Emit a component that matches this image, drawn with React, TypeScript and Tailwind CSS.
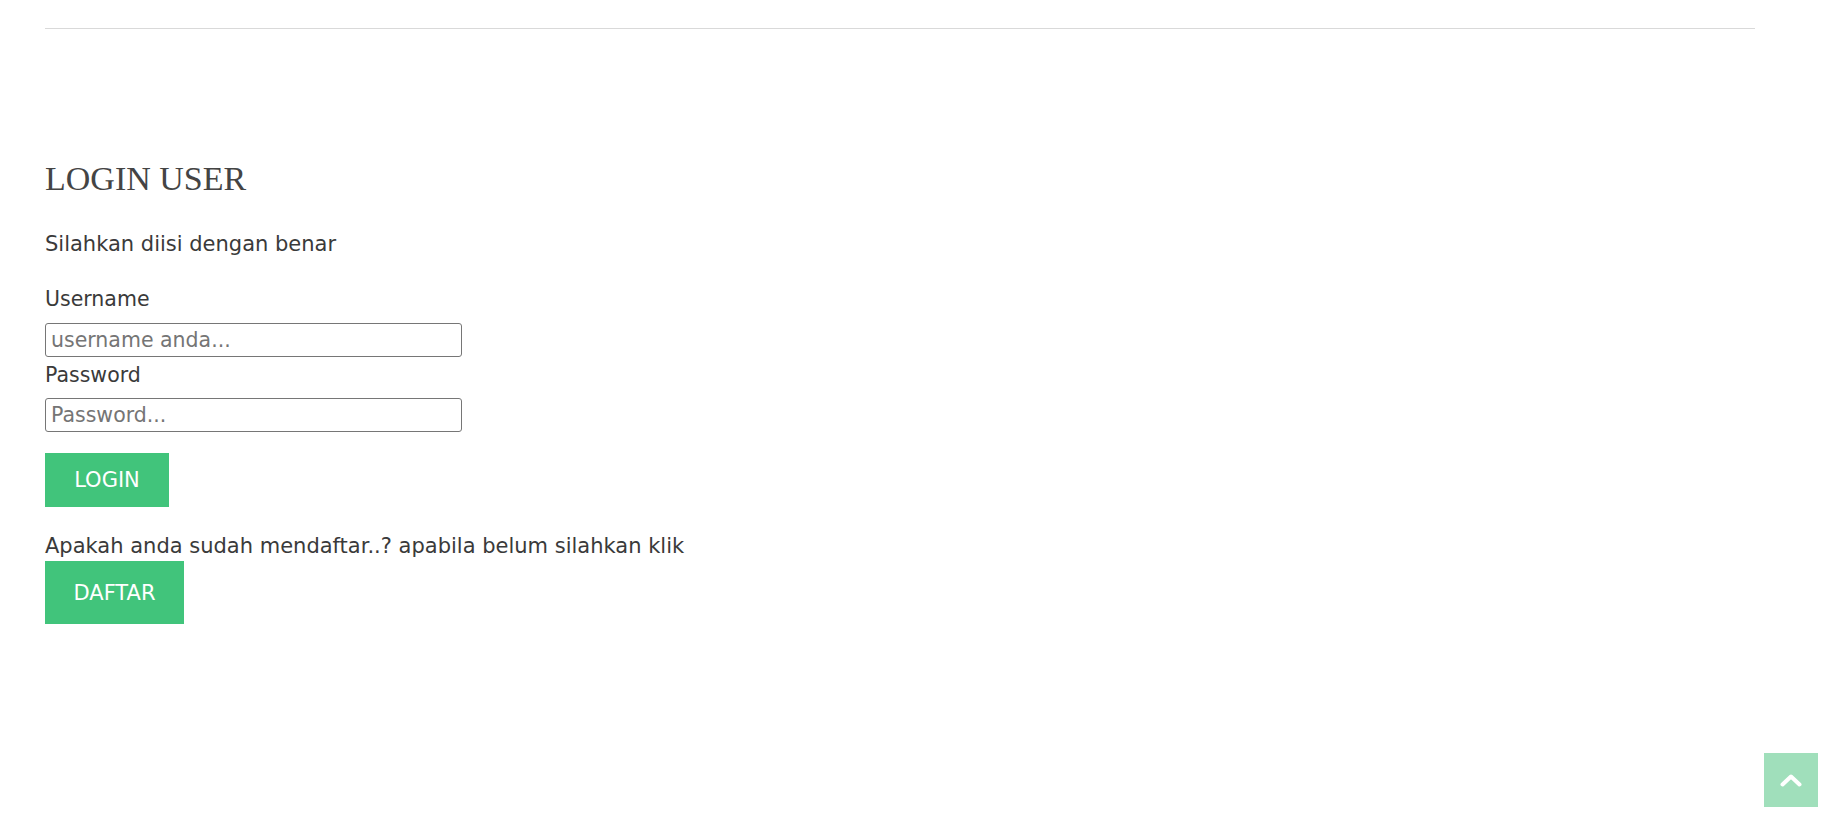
function BackToTop() {
  return (
    <a
      href="#"
      className="fixed right-[16px] bottom-[6px] w-[54px] h-[54px] bg-[#a0dfbb] flex items-center justify-center"
    >
      <svg width="22" height="13" viewBox="0 0 22 13" fill="none">
        <path d="M2.5 10.5 L11 2.5 L19.5 10.5" stroke="white" strokeWidth="4" strokeLinecap="round" strokeLinejoin="round" />
      </svg>
    </a>
  );
}

export default function App() {
  return (
    <div className="min-h-screen bg-white pl-[45px] pr-[79px] pt-[28px] font-['DejaVu_Sans',Verdana,sans-serif] text-[21px] leading-[24px] text-[#3a3a3a]">
      <hr className="border-0 border-t border-[#d9d9d9]" />

      <h1 className="mt-[130px] font-['Liberation_Serif',Georgia,serif] text-[34px] leading-[40px] font-normal text-[#444]">
        LOGIN USER
      </h1>
      <p className="mt-[33px]">Silahkan diisi dengan benar</p>

      <form className="flex flex-col items-start" onSubmit={(e) => e.preventDefault()}>
        <label className="block mt-[31px] text-[20.5px]">Username</label>
        <input
          type="text"
          placeholder="username anda..."
          className="mt-[12px] w-[417px] h-[34px] border border-[#767676] rounded-[3px] px-[5px] text-[20.5px] text-[#3a3a3a] placeholder:text-[#757575] outline-none"
        />
        <label className="block mt-[6px] text-[20.5px]">Password</label>
        <input
          type="password"
          placeholder="Password..."
          className="mt-[11px] w-[417px] h-[34px] border border-[#767676] rounded-[3px] px-[5px] text-[20.5px] text-[#3a3a3a] placeholder:text-[#757575] outline-none"
        />
        <button
          type="submit"
          className="mt-[21px] w-[124px] h-[54px] bg-[#41c47b] text-white flex items-center justify-center"
        >
          LOGIN
        </button>
      </form>

      <p className="mt-[27px]">Apakah anda sudah mendaftar..? apabila belum silahkan klik</p>
      <button className="mt-[3px] w-[139px] h-[63px] bg-[#41c47b] text-white flex items-center justify-center">
        DAFTAR
      </button>

      <BackToTop />
    </div>
  );
}
